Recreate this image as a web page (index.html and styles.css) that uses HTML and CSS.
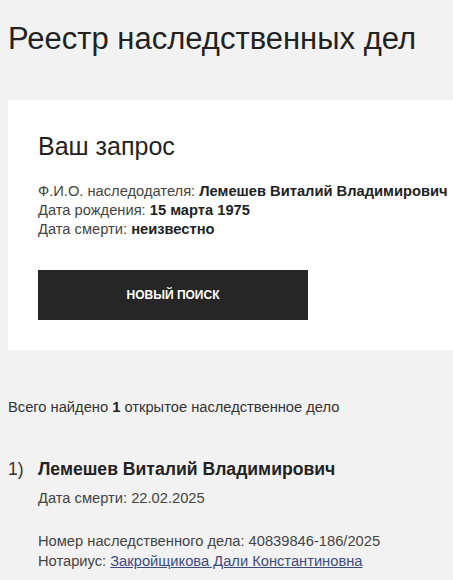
FILE: index.html
```html
<!DOCTYPE html>
<html lang="ru">
<head>
<meta charset="utf-8">
<title>Реестр наследственных дел</title>
<link rel="stylesheet" href="styles.css">
</head>
<body>
<div class="page">
  <h1 class="title">Реестр наследственных дел</h1>
  <section class="card">
    <h2 class="card-title">Ваш запрос</h2>
    <div class="fields">
      <div class="field">Ф.И.О. наследодателя: <b>Лемешев Виталий Владимирович</b></div>
      <div class="field">Дата рождения: <b>15 марта 1975</b></div>
      <div class="field">Дата смерти: <b>неизвестно</b></div>
    </div>
    <button class="btn" type="button">Новый поиск</button>
  </section>
  <p class="total">Всего найдено <b>1</b> открытое наследственное дело</p>
  <div class="result">
    <div class="result-num">1)</div>
    <div class="result-body">
      <div class="result-name">Лемешев Виталий Владимирович</div>
      <div class="result-date">Дата смерти: 22.02.2025</div>
      <div class="result-meta">
        <div>Номер наследственного дела: 40839846-186/2025</div>
        <div>Нотариус: <a class="link" href="#">Закройщикова Дали Константиновна</a></div>
      </div>
    </div>
  </div>
</div>
</body>
</html>
```

FILE: styles.css
```css
html, body {
  margin: 0;
  padding: 0;
  background: #f2f2f2;
  overflow: hidden;
}
body {
  font-family: "Liberation Sans", Arial, sans-serif;
  color: #222;
}
.page {
  padding: 0 0 0 8px;
}
.title {
  margin: 21px 0 43px;
  font-size: 31px;
  line-height: 36px;
  font-weight: normal;
  color: #222;
}
.card {
  background: #fff;
  width: 470px;
  box-sizing: border-box;
  padding: 32px 30px 30px;
}
.card-title {
  margin: 0 0 22px;
  font-size: 25px;
  line-height: 28px;
  font-weight: normal;
  color: #222;
}
.fields {
  font-size: 14.7px;
  line-height: 19px;
  color: #444;
}
.fields b {
  color: #222;
  font-weight: bold;
}
.btn {
  display: block;
  margin-top: 31px;
  width: 270px;
  height: 50px;
  border: 0;
  background: #262626;
  color: #fff;
  font-family: inherit;
  font-weight: bold;
  font-size: 12px;
  text-transform: uppercase;
  cursor: pointer;
}
.total {
  margin: 48px 0 0;
  font-size: 14.7px;
  line-height: 19px;
  color: #333;
}
.total b {
  color: #222;
}
.result {
  display: flex;
  margin-top: 41px;
}
.result-num {
  width: 30px;
  font-size: 17.6px;
  line-height: 22px;
  color: #333;
}
.result-name {
  font-size: 17.6px;
  line-height: 22px;
  font-weight: bold;
  color: #222;
}
.result-date {
  margin-top: 9px;
  font-size: 14.7px;
  line-height: 19px;
  color: #444;
}
.result-meta {
  margin-top: 23px;
  font-size: 14.7px;
  line-height: 20px;
  color: #444;
}
.link {
  color: #3d4c80;
  text-decoration: underline;
}
```
